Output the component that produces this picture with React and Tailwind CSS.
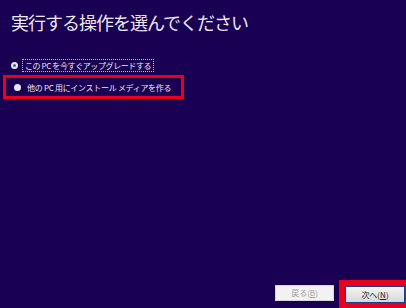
import React, { useState } from 'react'

const font = { fontFamily: '"Noto Sans CJK JP", "Noto Sans", sans-serif' }

function Radio({ checked }) {
  return (
    <span className="w-[7px] h-[7px] rounded-full bg-[#e8e6f0] flex items-center justify-center shrink-0">
      {checked && <span className="w-[3px] h-[3px] rounded-full bg-[#5a5a8a]" />}
    </span>
  )
}

export default function App() {
  const [choice, setChoice] = useState('upgrade')

  return (
    <div className="w-[406px] h-[308px] bg-[#1a0052] flex flex-col text-[#ebe8f2] overflow-hidden" style={font}>
      {/* Title */}
      <h1 className="pl-[11px] pt-[9px] text-[18px] leading-[26px] font-normal tracking-[-1px] whitespace-nowrap">
        実行する操作を選んでください
      </h1>

      {/* Options */}
      <div className="mt-[23px] flex flex-col">
        <label className="flex items-center pl-[11px] h-[14px] cursor-pointer" onClick={() => setChoice('upgrade')}>
          <Radio checked={choice === 'upgrade'} />
          <span className="ml-[4px] px-[2px] border border-dotted border-[#bcb8d0] text-[8px] leading-[11px] tracking-[-0.4px] whitespace-nowrap">
            この PC を今すぐアップグレードする
          </span>
        </label>
        <div className="mt-[3px] ml-[3px] w-[181px] h-[24px] border-[3px] border-[#e8001c] flex items-center pl-[8px]">
          <label className="flex items-center cursor-pointer" onClick={() => setChoice('media')}>
            <Radio checked={choice === 'media'} />
            <span className="ml-[6px] text-[8px] leading-[11px] tracking-[-0.3px] whitespace-nowrap">
              他の PC 用にインストール メディアを作る
            </span>
          </label>
        </div>
      </div>

      <div className="flex-1" />

      {/* Buttons */}
      <div className="flex items-end justify-end">
        <button
          disabled
          className="mb-[7px] w-[59px] h-[16px] bg-[#f2f2f2] border border-[#d8d8d8] text-[8px] leading-none text-[#a0a0a0]"
        >
          戻る(<span className="underline">B</span>)
        </button>
        <div className="ml-[5px] w-[67px] h-[28px] border-[3px] border-r-0 border-b-0 border-[#e8001c] bg-[#e8001c] flex items-start pl-[3px] pt-[3px]">
          <button className="w-[60px] h-[17px] border border-[#1d3d8a] bg-gradient-to-b from-[#f4f4f4] to-[#d8d8dc] text-[8px] leading-none text-[#222]">
            次へ(<span className="underline">N</span>)
          </button>
        </div>
      </div>
    </div>
  )
}
